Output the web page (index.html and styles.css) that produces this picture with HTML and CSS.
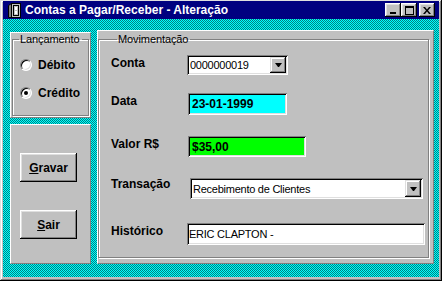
FILE: index.html
```html
<!DOCTYPE html>
<html>
<head>
	<meta charset="utf-8">
	<link rel="stylesheet" href="styles.css">
</head>
<body>
<div class="window">
	<div class="titlebar">
		<svg class="app-icon" width="13" height="15" viewBox="0 0 13 15">
			<polygon points="0.5,2.5 3.5,0.5 3.5,14.5 0.5,14.5" fill="#808080" stroke="#000"/>
			<rect x="3.5" y="0.5" width="9" height="14" fill="#c0c0c0" stroke="#000"/>
			<rect x="5.5" y="2.5" width="5" height="10" fill="none" stroke="#000"/>
			<rect x="7" y="4" width="2" height="3" fill="#fff"/>
			<rect x="7" y="8" width="2" height="3" fill="#fff"/>
		</svg>
		<span class="title">Contas a Pagar/Receber - Alteração</span>
		<div class="caption-buttons">
			<span class="cap-btn"><svg width="8" height="8" viewBox="0 0 8 8"><rect x="1" y="6" width="6" height="2" fill="#000"/></svg></span>
			<span class="cap-btn"><svg width="9" height="9" viewBox="0 0 9 9"><rect x="0.5" y="1" width="8" height="7.5" fill="none" stroke="#000"/><rect x="0" y="0" width="9" height="2" fill="#000"/></svg></span>
			<span class="cap-btn cap-close"><svg width="8" height="7" viewBox="0 0 8 7"><path d="M0 0h2l2 2.5l2-2.5h2l-3 3.5l3 3.5h-2l-2-2.5l-2 2.5h-2l3-3.5z" fill="#000"/></svg></span>
		</div>
	</div>

	<div class="client">
		<div class="left-col">
			<div class="panel panel-lanc">
				<fieldset class="group group-lanc">
					<legend>Lançamento</legend>
					<div class="radio-list">
						<div class="opt"><span class="radio"></span>Débito</div>
						<div class="opt"><span class="radio checked"></span>Crédito</div>
					</div>
				</fieldset>
			</div>
			<div class="panel panel-btns">
				<button class="btn"><u>G</u>ravar</button>
				<button class="btn"><u>S</u>air</button>
			</div>
		</div>

		<div class="panel panel-mov">
			<fieldset class="group group-mov">
				<legend>Movimentação</legend>

				<div class="row row-conta">
					<span class="lbl">Conta</span>
					<div class="field combo conta"><span class="val">0000000019</span><span class="drop"></span></div>
				</div>

				<div class="row row-data">
					<span class="lbl">Data</span>
					<div class="field data strong">23-01-1999</div>
				</div>

				<div class="row row-valor">
					<span class="lbl">Valor R$</span>
					<div class="field valor strong">$35,00</div>
				</div>

				<div class="row row-trans">
					<span class="lbl">Transação</span>
					<div class="field combo trans"><span class="val">Recebimento de Clientes</span><span class="drop"></span></div>
				</div>

				<div class="row row-hist">
					<span class="lbl">Histórico</span>
					<div class="field hist">ERIC CLAPTON -</div>
				</div>
			</fieldset>
		</div>
	</div>
</div>
</body>
</html>
```

FILE: styles.css
```css
body{
	margin: 0;
	font-family: "Liberation Sans", Arial, sans-serif;
}

.window{
	width: 442px;
	height: 281px;
	box-sizing: border-box;
	padding: 1px 3px 4px 3px;
	background: #c0c0c0;
	display: flex;
	flex-direction: column;
	box-shadow: inset -1px -1px #000, inset 1px 1px #dfdfdf,
		inset -2px -2px #808080, inset 2px 2px #fff;
}

/* title bar */
.titlebar{
	height: 18px;
	background: #000080;
	display: flex;
	align-items: center;
	padding: 0 4px 0 5px;
}
.app-icon{display: block;}
.title{
	color: #fff;
	font-weight: bold;
	font-size: 12px;
	margin-left: 4px;
	white-space: nowrap;
}
.caption-buttons{
	margin-left: auto;
	display: flex;
}
.cap-btn{
	width: 16px;
	height: 14px;
	box-sizing: border-box;
	background: #c0c0c0;
	display: flex;
	align-items: center;
	justify-content: center;
	box-shadow: inset -1px -1px #000, inset 1px 1px #fff,
		inset -2px -2px #808080, inset 2px 2px #dfdfdf;
}
.cap-btn svg{display: block;}
.cap-close{margin-left: 2px;}

/* client area, dithered desktop */
.client{
	flex: 1;
	background: repeating-conic-gradient(#00ffff 0% 25%, #008080 0% 50%) 0 0 / 2px 2px;
	display: flex;
	align-items: flex-start;
	gap: 6px;
	padding: 11px 0 0 7px;
}

.left-col{
	width: 81px;
	margin-top: 2px;
	display: flex;
	flex-direction: column;
	gap: 6px;
}

.panel{
	box-sizing: border-box;
	background: #c0c0c0;
	border: 1px solid;
	border-color: #fff #808080 #808080 #fff;
}
.panel-lanc{height: 86px; padding: 0 1px 1px 1px; display: flex;}
.panel-btns{
	height: 140px;
	display: flex;
	flex-direction: column;
	align-items: flex-start;
	gap: 28px;
	padding: 28px 0 0 9px;
}
.panel-mov{
	width: 337px;
	height: 234px;
	display: flex;
	padding: 2px 4px 5px 0;
}

/* etched group box */
.group{
	flex: 1;
	margin: 0;
	padding: 0;
	min-width: 0;
	border: 1px solid #808080;
	box-shadow: inset 1px 1px #fff, 1px 1px #fff;
	font-size: 11px;
}
.group legend{
	padding: 0 2px 0 1px;
	margin-left: 6px;
	line-height: 12px;
	letter-spacing: -0.1px;
}

.radio-list{
	display: flex;
	flex-direction: column;
	gap: 14px;
	padding: 13px 0 0 7px;
}
.opt{
	display: flex;
	align-items: center;
	gap: 6px;
	height: 14px;
	font-weight: bold;
	font-size: 12px;
}
.radio{
	width: 12px;
	height: 12px;
	box-sizing: border-box;
	border-radius: 50%;
	background: #fff;
	border: 1px solid;
	border-color: #808080 #fff #fff #808080;
	box-shadow: inset 1px 1px #000, inset -1px -1px #dfdfdf;
	display: flex;
	align-items: center;
	justify-content: center;
}
.radio.checked::after{
	content: "";
	width: 4px;
	height: 4px;
	border-radius: 50%;
	background: #000;
}

.btn{
	width: 57px;
	height: 29px;
	border: 0;
	padding: 0;
	background: #c0c0c0;
	font-family: "Liberation Sans", Arial, sans-serif;
	font-weight: bold;
	font-size: 12px;
	color: #000;
	box-shadow: inset -1px -1px #000, inset 1px 1px #fff,
		inset -2px -2px #808080, inset 2px 2px #dfdfdf;
}

/* rows of the Movimentação box */
.group-mov{padding: 10px 0 0 12px;}
.row{
	display: flex;
	align-items: flex-start;
}
.row-data{margin-top: 18px;}
.row-valor{margin-top: 21px;}
.row-trans{margin-top: 21px;}
.row-hist{margin-top: 24px;}

.lbl{
	width: 77px;
	padding-top: 1px;
	line-height: 14px;
	font-size: 12px;
	font-weight: bold;
}
.row-trans .lbl{padding-top: 0; margin-top: -1px;}

.field{
	box-sizing: border-box;
	background: #fff;
	display: flex;
	align-items: center;
	padding-left: 3px;
	font-size: 11px;
	letter-spacing: -0.25px;
	white-space: nowrap;
	box-shadow: inset 1px 1px #808080, inset -1px -1px #fff,
		inset 2px 2px #000, inset -2px -2px #dfdfdf;
}
.field.strong{
	font-size: 12px;
	font-weight: bold;
	letter-spacing: 0;
	padding-left: 4px;
}
.combo{padding-right: 2px;}
.combo .val{flex: 1;}
.drop{
	width: 16px;
	height: calc(100% - 4px);
	background: #c0c0c0;
	display: flex;
	align-items: center;
	justify-content: center;
	box-shadow: inset -1px -1px #000, inset 1px 1px #dfdfdf,
		inset -2px -2px #808080, inset 2px 2px #fff;
}
.drop::after{
	content: "";
	width: 1px;
	border-left: 3px solid transparent;
	border-right: 3px solid transparent;
	border-top: 4px solid #000;
}

.conta{width: 101px; height: 20px; margin-left: -1px;}
.data{width: 99px; height: 22px; background: #00ffff;}
.valor{width: 118px; height: 21px; background: #00ff00;}
.trans{width: 233px; height: 21px; margin-left: 2px;}
.hist{width: 238px; height: 22px; margin-left: -1px; padding-left: 2px;}
```
